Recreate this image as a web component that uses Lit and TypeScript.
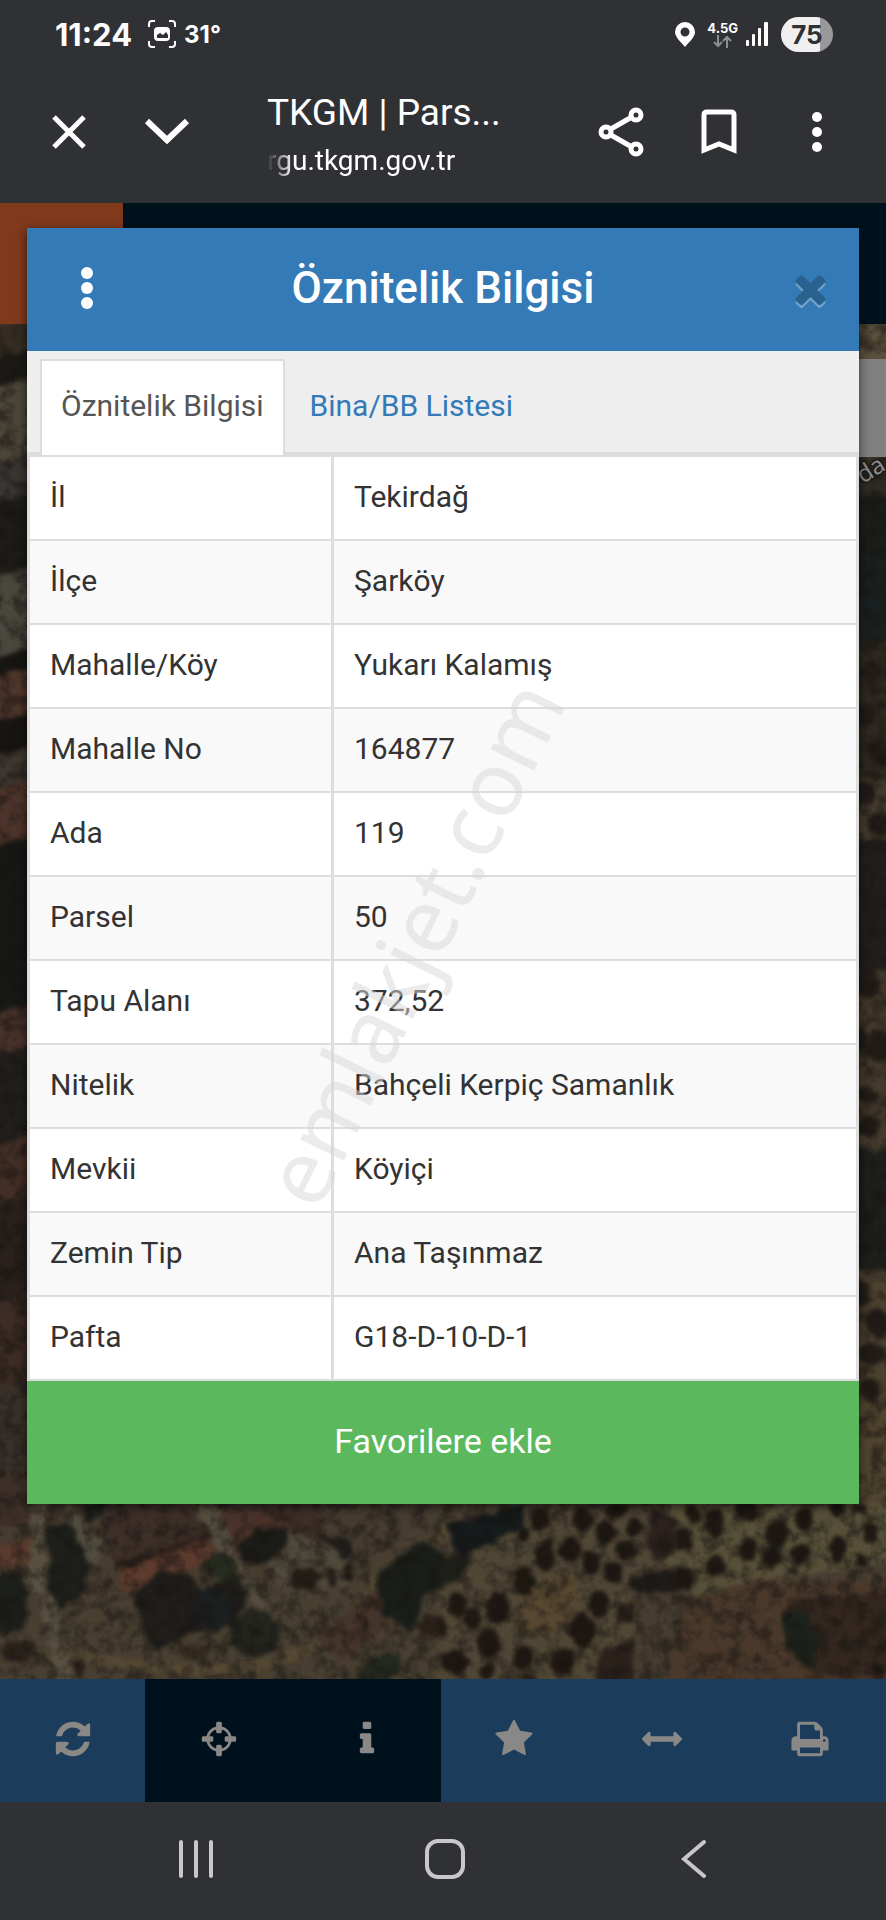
import { LitElement, html, svg, css } from "lit";
import { customElement, property, state } from "lit/decorators.js";
import { classMap } from "lit/directives/class-map.js";

const ICONS: Record<string, string> = {
  refresh:
    "M1639 1056q0 5-1 7-64 268-268 434.5t-478 166.5q-146 0-282.5-55t-243.5-157l-129 129q-19 19-45 19t-45-19-19-45v-448q0-26 19-45t45-19h448q26 0 45 19t19 45-19 45l-137 137q71 66 161 102t187 36q134 0 250-65t186-179q11-17 53-117 8-23 30-23h192q13 0 22.5 9.5t9.5 22.5zm25-800v448q0 26-19 45t-45 19h-448q-26 0-45-19t-19-45 19-45l138-138q-148-137-349-137-134 0-250 65t-186 179q-11 17-53 117-8 23-30 23h-199q-13 0-22.5-9.5t-9.5-22.5v-7q65-268 270-434.5t480-166.5q146 0 284 55.5t245 156.5l130-129q19-19 45-19t45 19 19 45z",
  crosshairs:
    "M1325 1024h-109q-26 0-45-19t-19-45v-128q0-26 19-45t45-19h109q-32-108-112.5-188.5t-188.5-112.5v109q0 26-19 45t-45 19h-128q-26 0-45-19t-19-45v-109q-108 32-188.5 112.5t-112.5 188.5h109q26 0 45 19t19 45v128q0 26-19 45t-45 19h-109q32 108 112.5 188.5t188.5 112.5v-109q0-26 19-45t45-19h128q26 0 45 19t19 45v109q108-32 188.5-112.5t112.5-188.5zm339-192v128q0 26-19 45t-45 19h-143q-37 161-154.5 278.5t-278.5 154.5v143q0 26-19 45t-45 19h-128q-26 0-45-19t-19-45v-143q-161-37-278.5-154.5t-154.5-278.5h-143q-26 0-45-19t-19-45v-128q0-26 19-45t45-19h143q37-161 154.5-278.5t278.5-154.5v-143q0-26 19-45t45-19h128q26 0 45 19t19 45v143q161 37 278.5 154.5t154.5 278.5h143q26 0 45 19t19 45z",
  info:
    "M1216 1344v128q0 26-19 45t-45 19h-512q-26 0-45-19t-19-45v-128q0-26 19-45t45-19h64v-384h-64q-26 0-45-19t-19-45v-128q0-26 19-45t45-19h384q26 0 45 19t19 45v576h64q26 0 45 19t19 45zm-128-1152v192q0 26-19 45t-45 19h-256q-26 0-45-19t-19-45v-192q0-26 19-45t45-19h256q26 0 45 19t19 45z",
  star:
    "M1728 647q0 22-26 48l-363 354 86 500q1 7 1 20 0 21-10.5 35.5t-30.5 14.5q-19 0-40-12l-449-236-449 236q-22 12-40 12-21 0-31.5-14.5t-10.5-35.5q0-6 2-20l86-500-364-354q-25-27-25-48 0-37 56-46l502-73 225-455q19-41 49-41t49 41l225 455 502 73q56 9 56 46z",
  arrows:
    "M1792 896q0 26-19 45l-256 256q-19 19-45 19t-45-19-19-45v-128h-1024v128q0 26-19 45t-45 19-45-19l-256-256q-19-19-19-45t19-45l256-256q19-19 45-19t45 19 19 45v128h1024v-128q0-26 19-45t45-19 45 19l256 256q19 19 19 45z",
  print:
    "M448 1536h896v-256h-896v256zm0-640h896v-384h-160q-40 0-68-28t-28-68v-160h-640v640zm1152 64q0-26-19-45t-45-19-45 19-19 45 19 45 45 19 45-19 19-45zm128 0v416q0 13-9.5 22.5t-22.5 9.5h-224v160q0 40-28 68t-68 28h-960q-40 0-68-28t-28-68v-160h-224q-13 0-22.5-9.5t-9.5-22.5v-416q0-79 56.5-135.5t135.5-56.5h64v-544q0-40 28-68t68-28h672q40 0 88 20t76 48l152 152q28 28 48 76t20 88v256h64q79 0 135.5 56.5t56.5 135.5z",
  times:
    "M1490 1322q0 40-28 68l-136 136q-28 28-68 28t-68-28l-294-294-294 294q-28 28-68 28t-68-28l-136-136q-28-28-28-68t28-68l294-294-294-294q-28-28-28-68t28-68l136-136q28-28 68-28t68 28l294 294 294-294q28-28 68-28t68 28l136 136q28 28 28 68t-28 68l-294 294 294 294q28 28 28 68z",
};

@customElement("tk-icon")
export class TkIcon extends LitElement {
  static styles = css`
    :host {
      display: inline-flex;
    }

    svg {
      width: var(--icon-size, 40px);
      height: var(--icon-size, 40px);
      fill: currentColor;
    }
  `;

  @property() name = "";

  render() {
    return html`
      <svg viewBox="0 0 1792 1792" aria-hidden="true"><path d=${ICONS[this.name] ?? ""}></path></svg>
    `;
  }
}

// aerial photo, dimmed by the open dialog
@customElement("tk-map")
export class TkMap extends LitElement {
  static styles = css`
    :host {
      display: block;
      position: relative;
      overflow: hidden;
      background: #463c30;
    }

    svg {
      position: absolute;
      inset: 0;
      width: 100%;
      height: 100%;
    }

    .label {
      font: 24px "Noto Sans", sans-serif;
      fill: #8b8a86;
      stroke: #1a1a18;
      stroke-width: 3px;
      paint-order: stroke;
    }
  `;

  // x, y, rx, ry
  orchard = [
    [1622, 90, 28, 32], [1748, 88, 34, 34], [1845, 62, 36, 22], [1816, 130, 30, 38], [1905, 110, 26, 32],
    [1568, 134, 16, 22], [1636, 202, 30, 44], [1712, 178, 32, 36], [1774, 216, 30, 34], [1878, 180, 34, 28],
    [1842, 248, 30, 34], [1571, 274, 32, 44], [1374, 340, 30, 38], [1418, 386, 26, 30], [1494, 354, 34, 46],
    [1798, 344, 30, 42], [1746, 420, 40, 50], [1468, 462, 36, 42], [1362, 516, 38, 36], [1569, 504, 30, 38],
    [1684, 514, 36, 40], [1462, 544, 26, 24], [2050, 148, 28, 36], [2146, 98, 30, 46], [2240, 62, 36, 30],
    [2330, 130, 38, 40], [2414, 86, 30, 30], [2245, 178, 26, 38], [2318, 200, 32, 32], [2400, 192, 30, 32],
    [2514, 176, 25, 38], [2610, 124, 22, 30], [2148, 228, 28, 34], [2512, 58, 22, 22], [2580, 56, 20, 18],
    [2078, 72, 24, 30], [2050, 266, 28, 34], [2584, 216, 20, 18], [2378, 246, 18, 14], [2634, 540, 18, 20],
    [1590, 566, 20, 12], [1329, 415, 8, 30],
  ];

  // side strips beside the dialog: y, height, colour
  left = [
    [0, 30, "#352c23"], [30, 28, "#1c1a16"], [58, 78, "#4c4638"], [136, 40, "#393632"], [176, 72, "#1d1c19"],
    [248, 82, "#4a473e"], [330, 18, "#181613"], [348, 46, "#51372c"], [394, 34, "#171512"], [428, 34, "#3e3730"],
    [462, 56, "#4d342a"], [518, 168, "#171816"], [686, 40, "#48322a"], [726, 90, "#211f1c"], [816, 60, "#432f26"],
    [876, 98, "#2a211c"], [974, 84, "#3d2c25"], [1058, 130, "#383029"],
  ];

  right = [
    [0, 132, "#5a4f3b"], [132, 40, "#2d2923"], [172, 60, "#1b1d1b"], [232, 84, "#1a2020"], [316, 140, "#2f2720"],
    [456, 60, "#453b2e"], [516, 130, "#211f1b"], [646, 180, "#453a2c"], [826, 120, "#1e1e1b"], [946, 110, "#4c412f"],
    [1056, 130, "#50442f"],
  ];

  rightTrees = [
    [870, 348, 12, 9], [862, 392, 14, 10], [880, 430, 12, 10], [864, 470, 11, 12], [880, 500, 13, 11],
    [866, 660, 12, 14], [858, 716, 8, 12], [880, 722, 14, 16], [868, 772, 10, 9], [870, 802, 12, 10],
    [862, 970, 9, 13], [878, 1000, 12, 14], [872, 1030, 12, 12], [870, 1066, 10, 12],
  ];

  render() {
    return html`
      <svg viewBox="0 0 886 1355" preserveAspectRatio="xMidYMax slice" aria-hidden="true">
        <defs>
          <filter id="rough" x="0" y="0" width="100%" height="100%" color-interpolation-filters="sRGB">
            <feTurbulence type="fractalNoise" baseFrequency="0.09" numOctaves="2" seed="4" result="n"></feTurbulence>
            <feDisplacementMap in="SourceGraphic" in2="n" scale="9" xChannelSelector="R" yChannelSelector="G"></feDisplacementMap>
            <feGaussianBlur stdDeviation="2"></feGaussianBlur>
          </filter>
          <filter id="speckle" x="0" y="0" width="100%" height="100%" color-interpolation-filters="sRGB">
            <feTurbulence type="fractalNoise" baseFrequency="0.07" numOctaves="4" seed="9"></feTurbulence>
            <feColorMatrix values="0 0 0 0 0.09  0 0 0 0 0.08  0 0 0 0 0.07  0 3 0 0 -1.2"></feColorMatrix>
          </filter>
        </defs>
        <g filter="url(#rough)">
          <rect x="-20" y="-20" width="926" height="1395" fill="#463c30"></rect>
          ${this.left.map(([y, h, c]) => svg`<path d=${`M-20 ${+y + 8}L60 ${+y - 12}v${h}l-80 20z`} fill=${c}></path>`)}
          ${this.right.map(([y, h, c]) => svg`<rect x="820" y=${y} width="90" height=${h} fill=${c}></rect>`)}
          ${this.rightTrees.map(([x, y, rx, ry]) => svg`<ellipse cx=${x} cy=${y} rx=${rx} ry=${ry} fill="#221c17"></ellipse>`)}
          <g transform="translate(0 1166) scale(0.3333)">
            <path fill="#3e3029" d="M-40-60h1000v260H760L640 160 350 240 300 60-40 120z"></path>
            <path fill="#483f31" d="M-40 420 300 340l700-60 380-260h400L1500 640H-40z"></path>
            <path fill="#4f4635" d="M1329 250 1620 60l380 20-90 330-60 240h-560z"></path>
            <path fill="#575039" d="M2010 40h720v170l-340 50-300 60-90-100z"></path>
            <path fill="#4a392b" d="M2050 340l200-70h480v380H1990z"></path>
            <path fill="#574731" d="M1560 300l160-50 30 110-110 80-90-20z"></path>
            <path fill="#33271f" d="M2360 330l370-30v250l-280 10-90-80z"></path>
            <path fill="#5a3a2d" d="M-40 180l150-40v80L-40 240z"></path>
            <path fill="#5c3a2d" d="M360 230l270-90 20 60-260 110-25-10z"></path>
            <path fill="#4c332a" d="M650 60h200l20 70-160 40z"></path>
            <path fill="#2b1f1a" d="M360 222l270-95v14L370 240z"></path>
            <path fill="#574f3f" d="M95-20h65l-20 110 25 110-5 90 70 320h-50l-70-300-30-20z"></path>
            <path fill="#514c3e" d="M205-20l20 80 80 100-10 70-35-20-60-100z"></path>
            <path fill="#554e3f" d="M560-20l90 60 50 140 100 170-30 10-90-130-60-120-60-90z"></path>
            <path fill="#50483a" d="M860 120l110 40 90 60v60l-200 40-60-90z"></path>
            <path fill="none" stroke="#544833" stroke-width="30" d="M200 480q220 80 560 50 250-50 360-250l260-190"></path>
            <path fill="#44342a" d="M940 440l220-160 10 120-140 120z"></path>
            <path fill="#1e1f1a" d="M130 110l80-10 40 80 20 60-30 80-60 30-40-60 10-100z"></path>
            <path fill="#1d201a" d="M-40 260l90-10 40 60-20 110-110 10z"></path>
            <path fill="#1f1e1a" d="M400 320l80-80 90 10 40 60 100-60 40 60-60 100-120 20-100 50-40-60z"></path>
            <circle cx="765" cy="430" r="74" fill="#24251e"></circle>
            <circle cx="640" cy="360" r="62" fill="#1b1f1f"></circle>
            <ellipse cx="660" cy="230" rx="50" ry="38" fill="#272c20"></ellipse>
            <path fill="#1b1b17" d="M710 160l60-40 90-10v60l-60 50-70-10z"></path>
            <path fill="#241d17" d="M880 240l60-10 30 30-30 40-60-5zM985 235h20v50h-15zM1040 220l20 10-10 40h-20z"></path>
            <path fill="#1f1e1a" d="M250 40h70l-10 40-50 20zM960 130l80 20 30 50-40 10z"></path>
            <path fill="#1a1e19" d="M1130 260l80-70 60-40 60 40v90l-60 40-40 110-80-60z"></path>
            <path fill="#24291f" d="M1060 560l60-60 80-10v60l-90 40z"></path>
            <ellipse cx="1300" cy="410" rx="40" ry="36" fill="#2a2019"></ellipse>
            <ellipse cx="50" cy="485" rx="48" ry="30" fill="#29201a"></ellipse>
            <ellipse cx="235" cy="535" rx="16" ry="22" fill="#29201a"></ellipse>
            <ellipse cx="585" cy="485" rx="46" ry="22" fill="#352b20"></ellipse>
            <path fill="#151a1b" d="M1340 100l100-20 130-40v70l-120 60-80 40z"></path>
            <path fill="#20201b" d="M1330 200l80-10-30 80-60 30z"></path>
            <path fill="#2b211d" d="M1960 60l70 20-10 110-60 30-20-70z"></path>
            <path fill="#1e1c18" d="M1890 260l100-20 90 20-10 40-150 10-20-10z"></path>
            <path fill="#2c221c" d="M1800 480l100-30v130h-120zM1850 350l60-20-10 60-50 10z"></path>
            <path fill="#1c231c" d="M2350 370l60-10 40 70-10 100-50-20-40-90z"></path>
            <path fill="#282a22" d="M2290 170l60-10v60l-60 10z"></path>
            ${this.orchard.map(([x, y, rx, ry]) => svg`<ellipse cx=${x} cy=${y} rx=${rx} ry=${ry} fill="#1e1712"></ellipse>`)}
          </g>
        </g>
        <rect width="886" height="1355" filter="url(#speckle)" opacity="0.5"></rect>
        <rect x="820" y="35" width="66" height="98" fill="#808080"></rect>
        <text class="label" transform="translate(863 160) rotate(-32)">da</text>
      </svg>
    `;
  }
}

@customElement("app-root")
export class AppRoot extends LitElement {
  static styles = css`
    :host {
      display: flex;
      flex-direction: column;
      min-height: 100vh;
      background: #303135;
      color: #fff;
      font-family: Roboto, "Noto Sans", sans-serif;
    }

    * {
      box-sizing: border-box;
    }

    button {
      border: 0;
      padding: 0;
      background: none;
      color: inherit;
      font: inherit;
      display: flex;
      align-items: center;
      justify-content: center;
    }

    .status {
      display: flex;
      align-items: center;
      height: 68px;
      padding: 0 53px 0 55px;
      font-family: Inter, sans-serif;
      font-weight: 700;
    }

    .clock {
      font-size: 31px;
      margin-right: 16px;
    }

    .temp {
      font-size: 24px;
      margin-left: 8px;
      margin-right: auto;
    }

    .net {
      display: flex;
      flex-direction: column;
      align-items: center;
      margin: 0 8px 0 12px;
      font-size: 13px;
      line-height: 14px;
    }

    .battery {
      width: 52px;
      height: 35px;
      margin-left: 12px;
      border-radius: 18px;
      background: linear-gradient(90deg, #f0f0f1 75%, #99999b 75%);
      color: #303135;
      font-size: 26px;
      line-height: 35px;
      text-align: center;
    }

    .browser {
      display: flex;
      align-items: center;
      height: 135px;
      padding: 0 20px 8px;
    }

    .browser button {
      width: 98px;
      height: 98px;
      flex: none;
    }

    .address {
      flex: 1;
      min-width: 0;
      padding: 6px 0 0 51px;
    }

    .title {
      font-size: 37px;
      line-height: 52px;
      white-space: nowrap;
    }

    .url {
      font-size: 28px;
      line-height: 44px;
      white-space: nowrap;
      mask-image: linear-gradient(90deg, transparent, #000 26px);
    }

    .page {
      flex: 1;
      display: grid;
    }

    .behind,
    .dialog {
      grid-area: 1 / 1;
    }

    .behind {
      display: flex;
      flex-direction: column;
    }

    .top {
      height: 121px;
      background: linear-gradient(90deg, #80391b 123px, #00111e 123px);
    }

    tk-map {
      flex: 1;
    }

    .tools {
      display: grid;
      grid-template-columns: 145px repeat(5, 1fr);
      height: 123px;
      padding-right: 2px;
      background: #1b3d5b;
      color: #8a8886;
    }

    .tools button {
      padding-bottom: 3px;
    }

    .tools .dark {
      background: #00111e;
    }

    .dialog {
      position: relative;
      align-self: start;
      margin: 25px 27px 0;
      background: #fff;
      color: #333;
      box-shadow: 0 3px 10px rgba(0, 0, 0, 0.6);
    }

    .head {
      display: flex;
      align-items: center;
      height: 123px;
      padding-left: 11px;
      background: #337ab7;
      color: #fff;
    }

    .head button {
      width: 98px;
      height: 98px;
      padding-bottom: 3px;
    }

    .head .close {
      --icon-size: 45px;
      color: #29628f;
      filter: drop-shadow(0 3px 0 rgba(255, 255, 255, 0.3));
    }

    h1 {
      flex: 1;
      margin: 0;
      padding: 0 11px 3px 0;
      font-size: 44px;
      font-weight: 500;
      text-align: center;
    }

    .tabs {
      display: flex;
      height: 104px;
      padding: 8px 13px 0;
      background: #eee;
      border-bottom: 3px solid #ddd;
      font-size: 30px;
    }

    .tab {
      height: 96px;
      padding: 0 19px 6px;
      border: 2px solid transparent;
      border-bottom: 0;
      margin-right: 4px;
      color: #337ab7;
    }

    .tab.active {
      background: #fff;
      border-color: #ddd;
      color: #555;
    }

    .sheet {
      position: relative;
    }

    table {
      width: 100%;
      border-collapse: collapse;
      font-size: 30px;
      line-height: 36px;
    }

    th,
    td {
      height: 84px;
      padding: 0 20px 2px;
      border: 3px solid #ddd;
      border-width: 2px 3px;
      font-weight: 400;
      text-align: left;
    }

    th {
      width: 304px;
    }

    tr:nth-child(even) {
      background: #f9f9f9;
    }

    .watermark {
      position: absolute;
      inset: 0;
      display: grid;
      place-items: center;
      pointer-events: none;
      padding: 48px 62px 0 0;
      font-family: "Noto Sans", sans-serif;
      font-size: 90px;
      color: rgba(215, 215, 215, 0.5);
    }

    .watermark span {
      transform: rotate(-64deg);
    }

    .favorite {
      width: 100%;
      height: 123px;
      padding-bottom: 3px;
      background: #5cb85c;
      color: #fff;
      font-size: 34px;
    }

    .system {
      display: flex;
      justify-content: center;
      gap: 151px;
      height: 118px;
      padding: 0 0 4px 4px;
    }

    .system button {
      width: 98px;
    }
  `;

  tabs = ["Öznitelik Bilgisi", "Bina/BB Listesi"];

  rows = [
    ["İl", "Tekirdağ"],
    ["İlçe", "Şarköy"],
    ["Mahalle/Köy", "Yukarı Kalamış"],
    ["Mahalle No", "164877"],
    ["Ada", "119"],
    ["Parsel", "50"],
    ["Tapu Alanı", "372,52"],
    ["Nitelik", "Bahçeli Kerpiç Samanlık"],
    ["Mevkii", "Köyiçi"],
    ["Zemin Tip", "Ana Taşınmaz"],
    ["Pafta", "G18-D-10-D-1"],
  ];

  tools = [
    { icon: "refresh", label: "Yenile" },
    { icon: "crosshairs", label: "Konum", dark: true },
    { icon: "info", label: "Bilgi", dark: true },
    { icon: "star", label: "Favoriler" },
    { icon: "arrows", label: "Ölçüm" },
    { icon: "print", label: "Yazdır" },
  ];

  @state() active = 0;

  renderStatus() {
    return html`
      <div class="status">
        <span class="clock">11:24</span>
        <svg width="28" height="28" viewBox="0 0 28 28" fill="none" stroke="#fff" stroke-width="2">
          <path d="M1 7V4q0-3 3-3h3M21 1h3q3 0 3 3v3M27 21v3q0 3-3 3h-3M7 27H4q-3 0-3-3v-3"></path>
          <rect x="6" y="7" width="16" height="14" rx="4" fill="#fff" stroke="none"></rect>
          <path d="M9 18v-3l3-2 3 2 3-3 2 3v3z" fill="#303135" stroke="none"></path>
        </svg>
        <span class="temp">31°</span>
        <svg width="20" height="25" viewBox="0 0 20 25" fill="#fff">
          <path fill-rule="evenodd" d="M10 0a10 10 0 0 1 10 10c0 5-5 9-10 15C5 19 0 15 0 10A10 10 0 0 1 10 0zm0 5.500a4.500 4.500 0 1 0 0 9 4.500 4.500 0 0 0 0-9z"></path>
        </svg>
        <div class="net">
          4.5G
          <svg width="20" height="13" viewBox="0 0 20 13" fill="none" stroke="#8d8e91" stroke-width="2">
            <path d="M5 0v11M1 7l4 4 4-4M14 13V2M10 6l4-4 4 4"></path>
          </svg>
        </div>
        <svg width="23" height="25" viewBox="0 0 23 25" fill="#fff">
          <rect x="0" y="18" width="3" height="6" rx="1"></rect>
          <rect x="6" y="12" width="3" height="12" rx="1"></rect>
          <rect x="12" y="6" width="3" height="18" rx="1"></rect>
          <rect x="18" y="0" width="4" height="24" rx="1"></rect>
        </svg>
        <span class="battery">75</span>
      </div>
    `;
  }

  renderBrowser() {
    return html`
      <header class="browser">
        <button aria-label="Kapat">
          <svg width="36" height="36" viewBox="0 0 36 36" fill="none" stroke="#fff" stroke-width="5"><path d="M3 3l30 30M33 3L3 33"></path></svg>
        </button>
        <button aria-label="Küçült">
          <svg width="46" height="28" viewBox="0 0 46 28" fill="none" stroke="#fff" stroke-width="6"><path d="M3 3l20 19L43 3"></path></svg>
        </button>
        <div class="address">
          <div class="title">TKGM | Pars...</div>
          <div class="url">rgu.tkgm.gov.tr</div>
        </div>
        <button aria-label="Paylaş">
          <svg width="46" height="50" viewBox="0 0 46 50" fill="none" stroke="#fff" stroke-width="5">
            <circle cx="38" cy="8" r="5"></circle><circle cx="8" cy="25" r="5"></circle><circle cx="38" cy="42" r="5"></circle>
            <path d="M12 22.500L33 10.500M12 27.500l21 12"></path>
          </svg>
        </button>
        <button aria-label="Yer işareti">
          <svg width="36" height="46" viewBox="0 0 36 46" fill="none" stroke="#fff" stroke-width="5">
            <path d="M3 41V6q0-3 3-3h24q3 0 3 3v35l-15-6z"></path>
          </svg>
        </button>
        <button aria-label="Menü">
          <svg width="12" height="42" viewBox="0 0 12 42" fill="#fff">
            <circle cx="6" cy="6" r="5"></circle><circle cx="6" cy="21" r="5"></circle><circle cx="6" cy="36" r="5"></circle>
          </svg>
        </button>
      </header>
    `;
  }

  renderDialog() {
    return html`
      <section class="dialog" role="dialog" aria-labelledby="heading">
        <div class="head">
          <button aria-label="Seçenekler">
            <svg width="12" height="42" viewBox="0 0 12 42" fill="#fff">
              <circle cx="6" cy="6" r="6"></circle><circle cx="6" cy="21" r="6"></circle><circle cx="6" cy="36" r="6"></circle>
            </svg>
          </button>
          <h1 id="heading">Öznitelik Bilgisi</h1>
          <button class="close" aria-label="Kapat"><tk-icon name="times"></tk-icon></button>
        </div>
        <div class="tabs" role="tablist">
          ${this.tabs.map(
            (tab, i) => html`
              <button
                role="tab"
                class=${classMap({ tab: true, active: i === this.active })}
                aria-selected=${i === this.active}
                @click=${() => (this.active = i)}
              >${tab}</button>
            `
          )}
        </div>
        <div class="sheet">
          <table>
            <tbody>
              ${this.rows.map(([name, value]) => html`<tr><th scope="row">${name}</th><td>${value}</td></tr>`)}
            </tbody>
          </table>
          <div class="watermark"><span>emlakjet.com</span></div>
        </div>
        <button class="favorite">Favorilere ekle</button>
      </section>
    `;
  }

  render() {
    return html`
      ${this.renderStatus()} ${this.renderBrowser()}
      <main class="page">
        <div class="behind">
          <div class="top"></div>
          <tk-map></tk-map>
          <div class="tools">
            ${this.tools.map(
              (t) => html`<button class=${classMap({ dark: !!t.dark })} aria-label=${t.label}><tk-icon name=${t.icon}></tk-icon></button>`
            )}
          </div>
        </div>
        ${this.renderDialog()}
      </main>
      <nav class="system">
        <button aria-label="Son uygulamalar">
          <svg width="36" height="40" viewBox="0 0 36 40" fill="none" stroke="#c8c8ca" stroke-width="4" stroke-linecap="round"><path d="M3 3v34M18 3v34M33 3v34"></path></svg>
        </button>
        <button aria-label="Ana ekran">
          <svg width="40" height="40" viewBox="0 0 40 40" fill="none" stroke="#c8c8ca" stroke-width="4"><rect x="2" y="2" width="36" height="36" rx="11"></rect></svg>
        </button>
        <button aria-label="Geri">
          <svg width="26" height="40" viewBox="0 0 26 40" fill="none" stroke="#c8c8ca" stroke-width="4" stroke-linecap="round"><path d="M23 3L3 20l20 17"></path></svg>
        </button>
      </nav>
    `;
  }
}
